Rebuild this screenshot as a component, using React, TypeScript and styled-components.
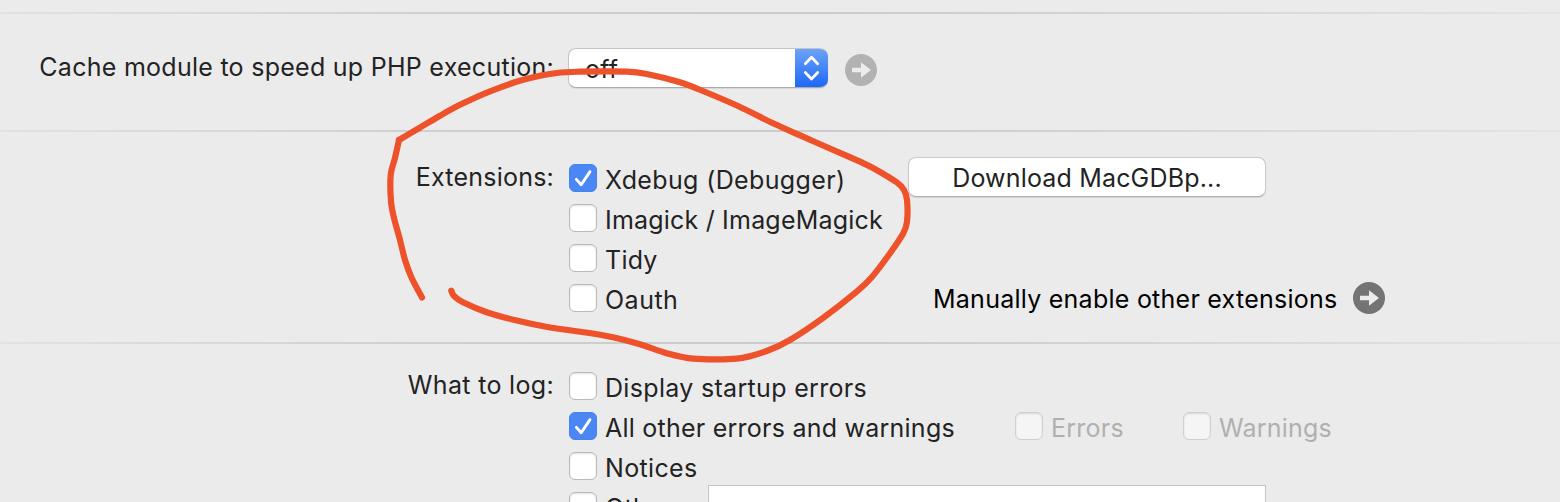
import React from "react";
import styled, { createGlobalStyle } from "styled-components";

const GlobalStyle = createGlobalStyle`
  *, *::before, *::after { box-sizing: border-box; }
  html, body { margin: 0; height: 502px; overflow: hidden; background: #ebebeb; }
  body { font-family: Inter, "Liberation Sans", sans-serif; font-size: 25px; color: #232323; }
`;

const Page = styled.main`
  position: relative;
  width: 1560px;
  height: 502px;
  padding-top: 12px;
  overflow: hidden;
  background: #ebebeb;
`;

const Divider = styled.hr`
  height: 2px;
  margin: 0;
  border: 0;
  background: linear-gradient(90deg, #e2e2e2 0, #cfcfcf 420px, #cbcbcb 780px, #cfcfcf 1000px, #e4e4e4 100%);
`;

const Section = styled.section<{ $height: number; $top: number }>`
  display: grid;
  grid-template-columns: 554px 1fr;
  column-gap: 14px;
  align-items: start;
  height: ${(p) => p.$height}px;
  padding-top: ${(p) => p.$top}px;
`;

const Text = styled.span<{ $spacing?: number }>`
  line-height: 40px;
  white-space: nowrap;
  letter-spacing: ${(p) => p.$spacing ?? 0}px;
`;

const Caption = styled(Text)`
  margin-top: -1px;
  text-align: right;
`;

const Controls = styled.div`
  display: flex;
  align-items: flex-start;
`;

const Select = styled.button`
  display: flex;
  width: 260px;
  height: 40px;
  margin: 0 17px 0 0;
  padding: 0;
  overflow: hidden;
  border: 1px solid #c4c4c4;
  border-bottom-color: #ababab;
  border-right: 0;
  border-radius: 8px;
  background: #fff;
  box-shadow: 0 1px 1px rgba(0, 0, 0, 0.08);
  font: inherit;
  color: inherit;
  text-align: left;
`;

const SelectValue = styled(Text)`
  flex: 1;
  padding-left: 16px;
`;

const Stepper = styled.span`
  display: flex;
  width: 33px;
  height: 40px;
  margin-top: -1px;
  background: linear-gradient(#6ea5f8, #1b66f6);
`;

const BadgeSlot = styled.span`
  display: flex;
  padding-top: 6px;
`;

const CheckColumn = styled.div<{ $width?: number }>`
  display: flex;
  flex-direction: column;
  width: ${(p) => (p.$width ? p.$width + "px" : "auto")};
  padding-top: 2px;
`;

const CheckRow = styled.div`
  display: flex;
  height: 40px;
`;

const CheckLabel = styled.label<{ $disabled?: boolean; $width?: number }>`
  display: flex;
  flex: none;
  align-items: flex-start;
  gap: 8px;
  width: ${(p) => (p.$width ? p.$width + "px" : "auto")};
  padding-left: 1px;
  color: ${(p) => (p.$disabled ? "#b0b0b0" : "inherit")};
`;

const Box = styled.span<{ $checked?: boolean; $disabled?: boolean }>`
  flex: none;
  display: flex;
  width: 28px;
  height: 28px;
  margin-top: 4px;
  border-radius: 6px;
  border: 1px solid ${(p) => (p.$checked ? "#4583ef" : p.$disabled ? "#cfcfcf" : "#b9b9b9")};
  background: ${(p) => (p.$checked ? "#4a87f4" : p.$disabled ? "#f5f5f5" : "#fff")};
  box-shadow: ${(p) => (p.$checked ? "none" : "inset 0 1px 2px rgba(0,0,0,.12)")};
`;

const Aside = styled.div`
  display: flex;
  flex-direction: column;
  align-items: flex-start;
  gap: 81px;
`;

const PushButton = styled.button`
  width: 358px;
  height: 40px;
  margin-top: -1px;
  padding: 0;
  border: 1px solid #c9c9c9;
  border-bottom-color: #b0b0b0;
  border-radius: 8px;
  background: #fff;
  box-shadow: 0 1px 1px rgba(0, 0, 0, 0.1);
  font: inherit;
  color: inherit;
`;

const Link = styled.div`
  display: flex;
  align-items: center;
  justify-content: space-between;
  width: 454px;
  height: 40px;
  padding-left: 2px;
  margin-left: 23px;
  color: #000;
`;

const LinkText = styled(Text)`
  padding-top: 2px;
`;

const TextField = styled.div`
  width: 558px;
  height: 40px;
  margin-top: -3px;
  border: 1px solid #c4c4c4;
  background: #fff;
`;

const Overlay = styled.svg`
  position: absolute;
  inset: 0;
  pointer-events: none;
`;

function ArrowBadge({ color }: { color: string }) {
  return (
    <svg width="32" height="32" viewBox="0 0 32 32">
      <circle cx="16" cy="16" r="16" fill={color} />
      <path d="M7 13.7H16V8.3L26 16L16 23.7V18.3H7Z" fill="#ececec" />
    </svg>
  );
}

type CheckProps = {
  text: string;
  spacing?: number;
  checked?: boolean;
  disabled?: boolean;
  width?: number;
};

function Check({ text, spacing, checked, disabled, width }: CheckProps) {
  return (
    <CheckLabel $disabled={disabled} $width={width}>
      <Box $checked={checked} $disabled={disabled}>
        {checked && (
          <svg width="26" height="26" viewBox="0 0 26 26" fill="none">
            <path d="M6.4 14.4L11.2 19.7L20 6.6" stroke="#fff" strokeWidth="2.9" strokeLinecap="round" strokeLinejoin="round" />
          </svg>
        )}
      </Box>
      <Text $spacing={spacing}>{text}</Text>
    </CheckLabel>
  );
}

type Point = [number, number];

const leftStroke: Point[] = [
  [422, 297.5], [411.7, 278], [405, 260], [400, 240], [394, 218], [391, 201.5], [390.7, 175], [395, 158], [399, 140],
];

const mainStroke: Point[] = [
  [399, 140], [419.3, 128], [440, 115.7], [460, 104.8], [490, 91.3], [525, 79.3], [556.7, 73], [580, 71.7],
  [626.7, 71.7], [646.7, 74], [680, 82.3], [698, 89], [738, 106], [773, 123.3], [803, 136.7],
  [831, 149], [860, 161.7], [873, 168], [896.7, 182.3], [904, 190], [907, 200], [907, 221.7], [903.3, 233.3],
  [890, 253.3], [871.7, 277.3], [856.7, 291.7], [823, 318], [790, 340], [766.7, 351], [736.7, 358.7],
  [693, 358.7], [666.7, 353.3], [640, 344.3], [613, 337.3], [586, 332.5], [550, 327.5], [516.7, 320.5], [486.7, 312.2],
  [463, 302.2], [454, 296], [451.3, 290.7],
];

function smooth(points: Point[]) {
  let d = `M${points[0]}`;
  for (let i = 0; i < points.length - 1; i++) {
    const a = points[Math.max(i - 1, 0)];
    const b = points[i];
    const c = points[i + 1];
    const e = points[Math.min(i + 2, points.length - 1)];
    d += `C${b[0] + (c[0] - a[0]) / 7},${b[1] + (c[1] - a[1]) / 7} ${c[0] - (e[0] - b[0]) / 7},${c[1] - (e[1] - b[1]) / 7} ${c}`;
  }
  return d;
}

export default function App() {
  return (
    <Page>
      <GlobalStyle />
      <Divider />
      <Section $height={116} $top={34}>
        <Caption $spacing={0.27}>Cache module to speed up PHP execution:</Caption>
        <Controls>
          <Select>
            <SelectValue $spacing={0.3}>off</SelectValue>
            <Stepper>
              <svg width="33" height="40" viewBox="0 0 33 40" fill="none" stroke="#fff" strokeWidth="2.7" strokeLinecap="round" strokeLinejoin="round">
                <path d="M10.3 15.7L16.5 9.2L22.7 15.7M10.3 24.5L16.5 31L22.7 24.5" />
              </svg>
            </Stepper>
          </Select>
          <BadgeSlot>
            <ArrowBadge color="#b2b2b2" />
          </BadgeSlot>
        </Controls>
      </Section>
      <Divider />
      <Section $height={210} $top={26}>
        <Caption $spacing={0.22}>Extensions:</Caption>
        <Controls>
          <CheckColumn $width={340}>
            <CheckRow><Check text="Xdebug (Debugger)" spacing={0.36} checked /></CheckRow>
            <CheckRow><Check text="Imagick / ImageMagick" spacing={0.2} /></CheckRow>
            <CheckRow><Check text="Tidy" spacing={0.25} /></CheckRow>
            <CheckRow><Check text="Oauth" spacing={0.5} /></CheckRow>
          </CheckColumn>
          <Aside>
            <PushButton><Text $spacing={0.17}>Download MacGDBp...</Text></PushButton>
            <Link>
              <LinkText $spacing={0.25}>Manually enable other extensions</LinkText>
              <ArrowBadge color="#747474" />
            </Link>
          </Aside>
        </Controls>
      </Section>
      <Divider />
      <Section $height={158} $top={22}>
        <Caption $spacing={0.33}>What to log:</Caption>
        <CheckColumn>
          <CheckRow><Check text="Display startup errors" spacing={0.32} /></CheckRow>
          <CheckRow>
            <Check text="All other errors and warnings" spacing={0.24} checked width={446} />
            <Check text="Errors" spacing={0.25} disabled width={168} />
            <Check text="Warnings" spacing={0.2} disabled />
          </CheckRow>
          <CheckRow><Check text="Notices" spacing={0.33} /></CheckRow>
          <CheckRow>
            <Check text="Other:" spacing={0.3} width={140} />
            <TextField />
          </CheckRow>
        </CheckColumn>
      </Section>
      <Overlay width="1560" height="502" viewBox="0 0 1560 502" fill="none" stroke="#ed522a" strokeWidth="6.2" strokeLinecap="round" strokeLinejoin="round">
        <path d={smooth(leftStroke)} />
        <path d={smooth(mainStroke)} />
      </Overlay>
    </Page>
  );
}
